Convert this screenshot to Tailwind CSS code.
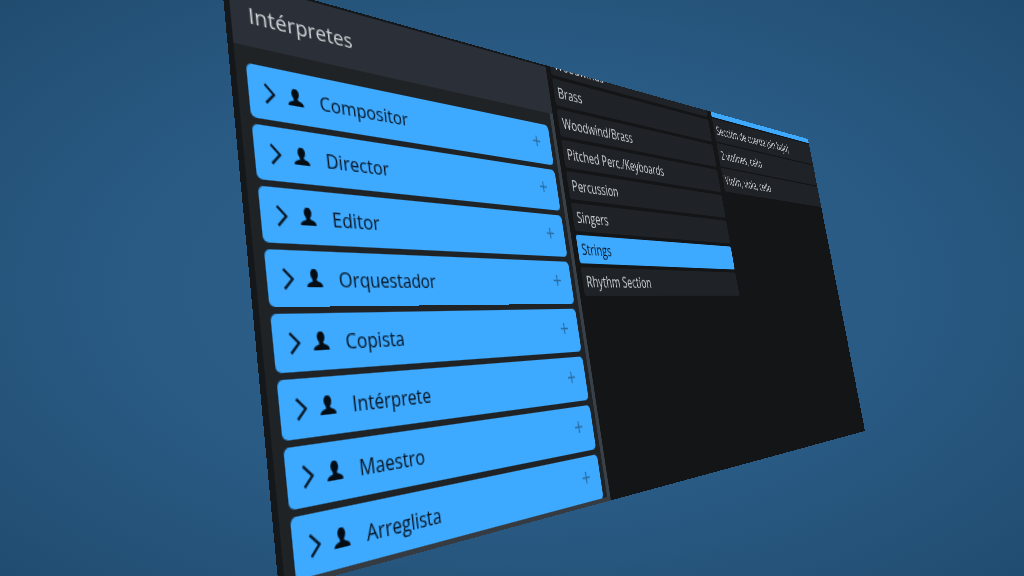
<!DOCTYPE html>
<html lang="es">
<head>
    <meta charset="UTF-8">
    <meta name="viewport" content="width=device-width, initial-scale=1.0">
    <title>Intérpretes</title>
    <script src="https://cdn.jsdelivr.net/npm/@tailwindcss/browser@4"></script>
</head>
<body class="w-[1024px] h-[576px] overflow-hidden relative bg-[radial-gradient(ellipse_at_center,#2e628c_0%,#295a83_55%,#214c70_100%)] font-['Open_Sans',sans-serif]">

    <!-- flat panel, tilted with a homography measured off the reference -->
    <div class="absolute left-0 top-0 w-[1000px] h-[450px] flex overflow-hidden bg-[#131517] origin-top-left [transform:matrix3d(1.44152,0.312,0,0.00105758,0.066156,1.23824,0,-0.00022481,0,0,1,0,221,-26,0,1)]">

        <!-- Intérpretes -->
        <div class="w-[375px] h-full flex flex-col bg-[#1f2326] border-l-[5px] border-[#15181b] border-b-[4px] border-b-[#363b42]">
            <div class="h-[54px] shrink-0 bg-[#2b3038] border-t-[2px] border-[#15181b] pl-[15px] pt-[12px] text-[19px] text-[#cfd3d6]">Intérpretes</div>
            <div class="flex-1 min-h-0 overflow-hidden flex flex-col gap-[5px] pt-[14px] pl-[9px] pr-[6px] border-r-[5px] border-[#3a4048]">
                <div class="h-[43px] shrink-0 flex items-center rounded-[5px] bg-[#3da9ff] text-[#081420] text-[17px] pl-[12px] pr-[15px]">
                    <svg class="w-[12px] h-[20px] shrink-0" viewBox="0 0 12 20" fill="none" stroke="#0a1622" stroke-width="2"><path d="M2.500 2.500l7.500 7.500-7.500 7.500"/></svg>
                    <svg class="w-[17px] h-[17px] shrink-0 ml-[9px]" viewBox="0 0 16 16" fill="#050d14"><path d="M8 1c2 0 3.200 1.600 3.200 3.600 0 1.500-.6 2.900-1.400 3.700v1.200c1.500.7 4.200 1.300 4.800 3v1.500H1.400V13c.6-1.700 3.300-2.300 4.800-3V8.300C5.400 7.500 4.800 6.100 4.800 4.600 4.800 2.600 6 1 8 1z"/></svg>
                    <span class="ml-[14px]">Compositor</span>
                    <svg class="w-[13px] h-[13px] ml-auto mt-[-4px]" viewBox="0 0 13 13" fill="none" stroke="#2a6c9f" stroke-width="1.6"><path d="M6.500 1v11M1 6.500h11"/></svg>
                </div>
                <div class="h-[43px] shrink-0 flex items-center rounded-[5px] bg-[#3da9ff] text-[#081420] text-[17px] pl-[12px] pr-[15px]">
                    <svg class="w-[12px] h-[20px] shrink-0" viewBox="0 0 12 20" fill="none" stroke="#0a1622" stroke-width="2"><path d="M2.500 2.500l7.500 7.500-7.500 7.500"/></svg>
                    <svg class="w-[17px] h-[17px] shrink-0 ml-[9px]" viewBox="0 0 16 16" fill="#050d14"><path d="M8 1c2 0 3.200 1.600 3.200 3.600 0 1.500-.6 2.900-1.400 3.700v1.200c1.500.7 4.200 1.300 4.800 3v1.500H1.400V13c.6-1.700 3.300-2.300 4.800-3V8.300C5.400 7.500 4.800 6.100 4.800 4.600 4.800 2.600 6 1 8 1z"/></svg>
                    <span class="ml-[14px]">Director</span>
                    <svg class="w-[13px] h-[13px] ml-auto mt-[-4px]" viewBox="0 0 13 13" fill="none" stroke="#2a6c9f" stroke-width="1.6"><path d="M6.500 1v11M1 6.500h11"/></svg>
                </div>
                <div class="h-[43px] shrink-0 flex items-center rounded-[5px] bg-[#3da9ff] text-[#081420] text-[17px] pl-[12px] pr-[15px]">
                    <svg class="w-[12px] h-[20px] shrink-0" viewBox="0 0 12 20" fill="none" stroke="#0a1622" stroke-width="2"><path d="M2.500 2.500l7.500 7.500-7.500 7.500"/></svg>
                    <svg class="w-[17px] h-[17px] shrink-0 ml-[9px]" viewBox="0 0 16 16" fill="#050d14"><path d="M8 1c2 0 3.200 1.600 3.200 3.600 0 1.500-.6 2.900-1.400 3.700v1.200c1.500.7 4.200 1.300 4.800 3v1.500H1.400V13c.6-1.700 3.300-2.300 4.800-3V8.300C5.400 7.500 4.800 6.100 4.800 4.600 4.800 2.600 6 1 8 1z"/></svg>
                    <span class="ml-[14px]">Editor</span>
                    <svg class="w-[13px] h-[13px] ml-auto mt-[-4px]" viewBox="0 0 13 13" fill="none" stroke="#2a6c9f" stroke-width="1.6"><path d="M6.500 1v11M1 6.500h11"/></svg>
                </div>
                <div class="h-[43px] shrink-0 flex items-center rounded-[5px] bg-[#3da9ff] text-[#081420] text-[17px] pl-[12px] pr-[15px]">
                    <svg class="w-[12px] h-[20px] shrink-0" viewBox="0 0 12 20" fill="none" stroke="#0a1622" stroke-width="2"><path d="M2.500 2.500l7.500 7.500-7.500 7.500"/></svg>
                    <svg class="w-[17px] h-[17px] shrink-0 ml-[9px]" viewBox="0 0 16 16" fill="#050d14"><path d="M8 1c2 0 3.200 1.600 3.200 3.600 0 1.500-.6 2.900-1.400 3.700v1.200c1.500.7 4.200 1.300 4.800 3v1.500H1.400V13c.6-1.700 3.300-2.300 4.800-3V8.300C5.400 7.500 4.800 6.100 4.800 4.600 4.800 2.600 6 1 8 1z"/></svg>
                    <span class="ml-[14px]">Orquestador</span>
                    <svg class="w-[13px] h-[13px] ml-auto mt-[-4px]" viewBox="0 0 13 13" fill="none" stroke="#2a6c9f" stroke-width="1.6"><path d="M6.500 1v11M1 6.500h11"/></svg>
                </div>
                <div class="h-[43px] shrink-0 flex items-center rounded-[5px] bg-[#3da9ff] text-[#081420] text-[17px] pl-[12px] pr-[15px]">
                    <svg class="w-[12px] h-[20px] shrink-0" viewBox="0 0 12 20" fill="none" stroke="#0a1622" stroke-width="2"><path d="M2.500 2.500l7.500 7.500-7.500 7.500"/></svg>
                    <svg class="w-[17px] h-[17px] shrink-0 ml-[9px]" viewBox="0 0 16 16" fill="#050d14"><path d="M8 1c2 0 3.200 1.600 3.200 3.600 0 1.500-.6 2.900-1.400 3.700v1.200c1.500.7 4.200 1.300 4.800 3v1.500H1.400V13c.6-1.700 3.300-2.300 4.800-3V8.300C5.400 7.500 4.800 6.100 4.800 4.600 4.800 2.600 6 1 8 1z"/></svg>
                    <span class="ml-[14px]">Copista</span>
                    <svg class="w-[13px] h-[13px] ml-auto mt-[-4px]" viewBox="0 0 13 13" fill="none" stroke="#2a6c9f" stroke-width="1.6"><path d="M6.500 1v11M1 6.500h11"/></svg>
                </div>
                <div class="h-[43px] shrink-0 flex items-center rounded-[5px] bg-[#3da9ff] text-[#081420] text-[17px] pl-[12px] pr-[15px]">
                    <svg class="w-[12px] h-[20px] shrink-0" viewBox="0 0 12 20" fill="none" stroke="#0a1622" stroke-width="2"><path d="M2.500 2.500l7.500 7.500-7.500 7.500"/></svg>
                    <svg class="w-[17px] h-[17px] shrink-0 ml-[9px]" viewBox="0 0 16 16" fill="#050d14"><path d="M8 1c2 0 3.200 1.600 3.200 3.600 0 1.500-.6 2.900-1.400 3.700v1.200c1.500.7 4.200 1.300 4.800 3v1.500H1.400V13c.6-1.700 3.300-2.300 4.800-3V8.300C5.400 7.500 4.800 6.100 4.800 4.600 4.800 2.600 6 1 8 1z"/></svg>
                    <span class="ml-[14px]">Intérprete</span>
                    <svg class="w-[13px] h-[13px] ml-auto mt-[-4px]" viewBox="0 0 13 13" fill="none" stroke="#2a6c9f" stroke-width="1.6"><path d="M6.500 1v11M1 6.500h11"/></svg>
                </div>
                <div class="h-[43px] shrink-0 flex items-center rounded-[5px] bg-[#3da9ff] text-[#081420] text-[17px] pl-[12px] pr-[15px]">
                    <svg class="w-[12px] h-[20px] shrink-0" viewBox="0 0 12 20" fill="none" stroke="#0a1622" stroke-width="2"><path d="M2.500 2.500l7.500 7.500-7.500 7.500"/></svg>
                    <svg class="w-[17px] h-[17px] shrink-0 ml-[9px]" viewBox="0 0 16 16" fill="#050d14"><path d="M8 1c2 0 3.200 1.600 3.200 3.600 0 1.500-.6 2.900-1.400 3.700v1.200c1.500.7 4.200 1.300 4.800 3v1.500H1.400V13c.6-1.700 3.300-2.300 4.800-3V8.300C5.400 7.500 4.800 6.100 4.800 4.600 4.800 2.600 6 1 8 1z"/></svg>
                    <span class="ml-[14px]">Maestro</span>
                    <svg class="w-[13px] h-[13px] ml-auto mt-[-4px]" viewBox="0 0 13 13" fill="none" stroke="#2a6c9f" stroke-width="1.6"><path d="M6.500 1v11M1 6.500h11"/></svg>
                </div>
                <div class="h-[43px] shrink-0 flex items-center rounded-[5px] bg-[#3da9ff] text-[#081420] text-[17px] pl-[12px] pr-[15px]">
                    <svg class="w-[12px] h-[20px] shrink-0" viewBox="0 0 12 20" fill="none" stroke="#0a1622" stroke-width="2"><path d="M2.500 2.500l7.500 7.500-7.500 7.500"/></svg>
                    <svg class="w-[17px] h-[17px] shrink-0 ml-[9px]" viewBox="0 0 16 16" fill="#050d14"><path d="M8 1c2 0 3.200 1.600 3.200 3.600 0 1.500-.6 2.900-1.400 3.700v1.200c1.500.7 4.200 1.300 4.800 3v1.500H1.400V13c.6-1.700 3.300-2.300 4.800-3V8.300C5.400 7.500 4.800 6.100 4.800 4.600 4.800 2.600 6 1 8 1z"/></svg>
                    <span class="ml-[14px]">Arreglista</span>
                    <svg class="w-[13px] h-[13px] ml-auto mt-[-4px]" viewBox="0 0 13 13" fill="none" stroke="#2a6c9f" stroke-width="1.6"><path d="M6.500 1v11M1 6.500h11"/></svg>
                </div>
            </div>
        </div>

        <!-- familias -->
        <div class="w-[335px] h-full overflow-hidden flex flex-col gap-[4px] mt-[-21px] pl-[8px] pr-[11px] text-[16px] text-[#cfd3d6]">
            <div class="h-[30px] shrink-0 flex items-center pl-[6px] pt-[4px] rounded-[3px] bg-[#1f2327]">Woodwinds</div>
            <div class="h-[30px] shrink-0 flex items-center pl-[6px] rounded-[3px] bg-[#1f2327]">Brass</div>
            <div class="h-[30px] shrink-0 flex items-center pl-[6px] rounded-[3px] bg-[#1f2327]">Woodwind/Brass</div>
            <div class="h-[30px] shrink-0 flex items-center pl-[6px] rounded-[3px] bg-[#1f2327]">Pitched Perc./Keyboards</div>
            <div class="h-[30px] shrink-0 flex items-center pl-[6px] rounded-[3px] bg-[#1f2327]">Percussion</div>
            <div class="h-[30px] shrink-0 flex items-center pl-[6px] rounded-[3px] bg-[#1f2327]">Singers</div>
            <div class="h-[30px] shrink-0 flex items-center pl-[6px] rounded-[3px] bg-[#3da9ff] text-[#081420]">Strings</div>
            <div class="h-[30px] shrink-0 flex items-center pl-[6px] rounded-[3px] bg-[#1f2327]">Rhythm Section</div>
        </div>

        <!-- conjuntos -->
        <div class="flex-1 h-full overflow-hidden flex flex-col gap-[2px] mt-[-27px] text-[16px] text-[#cfd3d6]">
            <div class="h-[34px] shrink-0 bg-[#3da9ff]"></div>
            <div class="h-[32px] shrink-0 flex items-center pl-[6px] bg-[#1f2327] whitespace-nowrap">Sección de cuerda (sin bajo)</div>
            <div class="h-[32px] shrink-0 flex items-center pl-[6px] bg-[#1f2327]">2 violines, cello</div>
            <div class="h-[32px] shrink-0 flex items-center pl-[6px] bg-[#1f2327]">Violín, viola, cello</div>
        </div>
    </div>
</body>
</html>
